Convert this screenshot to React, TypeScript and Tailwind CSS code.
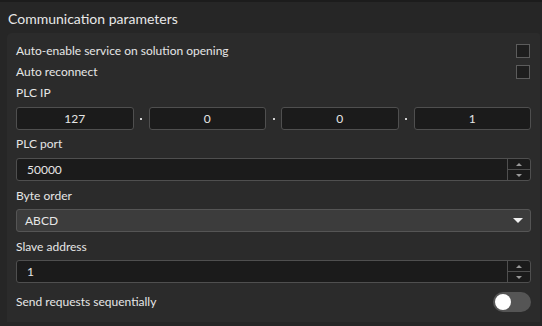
const font = { fontFamily: 'Lato, "Noto Sans", sans-serif' }

function Checkbox() {
  return <div className="h-[14px] w-[14px] border border-[#5c5c5c] bg-[#1e1e1e]" />
}

function Label({ children }: { children: string }) {
  return <div className="text-[12px] leading-[16px] text-[#e6e6e6]">{children}</div>
}

function CheckRow({ label }: { label: string }) {
  return (
    <div className="flex h-[21px] items-center justify-between pr-[1px]">
      <Label>{label}</Label>
      <Checkbox />
    </div>
  )
}

function IpBox({ value }: { value: string }) {
  return (
    <div className="flex h-[23px] flex-1 items-center justify-center rounded-[3px] border border-[#4f4f4f] bg-[#1b1b1b] text-[12px] text-[#e6e6e6]">
      {value}
    </div>
  )
}

function Dot() {
  return (
    <div className="flex w-[15px] items-center justify-center">
      <div className="h-[2px] w-[2px] bg-[#d0d0d0]" />
    </div>
  )
}

function Spinner({ value }: { value: string }) {
  return (
    <div className="flex h-[23px] rounded-[3px] border border-[#4f4f4f] bg-[#1b1b1b]">
      <div className="flex flex-1 items-center pl-[10px] text-[12px] text-[#e6e6e6]">{value}</div>
      <div className="flex w-[23px] flex-col border-l border-[#4f4f4f]">
        <div className="flex flex-1 items-center justify-center border-b border-[#4f4f4f]">
          <div className="h-0 w-0 border-x-[3px] border-b-[3px] border-x-transparent border-b-[#9a9a9a]" />
        </div>
        <div className="flex flex-1 items-center justify-center">
          <div className="h-0 w-0 border-x-[3px] border-t-[3px] border-x-transparent border-t-[#9a9a9a]" />
        </div>
      </div>
    </div>
  )
}

export default function App() {
  return (
    <div className="h-[326px] w-[542px] bg-[#1c1c1c] pt-[2px]" style={font}>
      <div className="flex h-[324px] flex-col bg-[#262626] pr-[2px]">
        <div className="flex h-[31px] items-center pl-[8px] pt-[2px] text-[14px] text-[#e8e8e8]">
          Communication parameters
        </div>
        <div className="ml-[7px] flex h-[289px] flex-col rounded-tl-[5px] rounded-tr-[3px] bg-[#2b2b2b] pl-[9px] pr-[9px] pt-[7px]">
          <CheckRow label="Auto-enable service on solution opening" />
          <CheckRow label="Auto reconnect" />
          <div className="flex h-[21px] items-center">
            <Label>PLC IP</Label>
          </div>
          <div className="mt-[4px] flex">
            <IpBox value="127" />
            <Dot />
            <IpBox value="0" />
            <Dot />
            <IpBox value="0" />
            <Dot />
            <IpBox value="1" />
          </div>
          <div className="mt-[4px] flex h-[20px] items-center">
            <Label>PLC port</Label>
          </div>
          <div className="mt-[4px]">
            <Spinner value="50000" />
          </div>
          <div className="mt-[3px] flex h-[24px] items-center">
            <Label>Byte order</Label>
          </div>
          <div className="mt-[1px] flex h-[23px] items-center justify-between rounded-[3px] border border-[#555555] bg-[#3c3c3c] pl-[8px] pr-[7px] text-[12px] text-[#e6e6e6]">
            <span>ABCD</span>
            <div className="h-0 w-0 border-x-[5px] border-t-[5px] border-x-transparent border-t-[#f0f0f0]" />
          </div>
          <div className="mt-[3px] flex h-[24px] items-center">
            <Label>Slave address</Label>
          </div>
          <div className="mt-[1px]">
            <Spinner value="1" />
          </div>
          <div className="mt-[9px] flex h-[20px] items-center justify-between">
            <Label>Send requests sequentially</Label>
            <div className="flex h-[20px] w-[38px] items-center rounded-full bg-[#555555] pl-[2px]">
              <div className="h-[16px] w-[16px] rounded-full bg-white" />
            </div>
          </div>
        </div>
      </div>
    </div>
  )
}
